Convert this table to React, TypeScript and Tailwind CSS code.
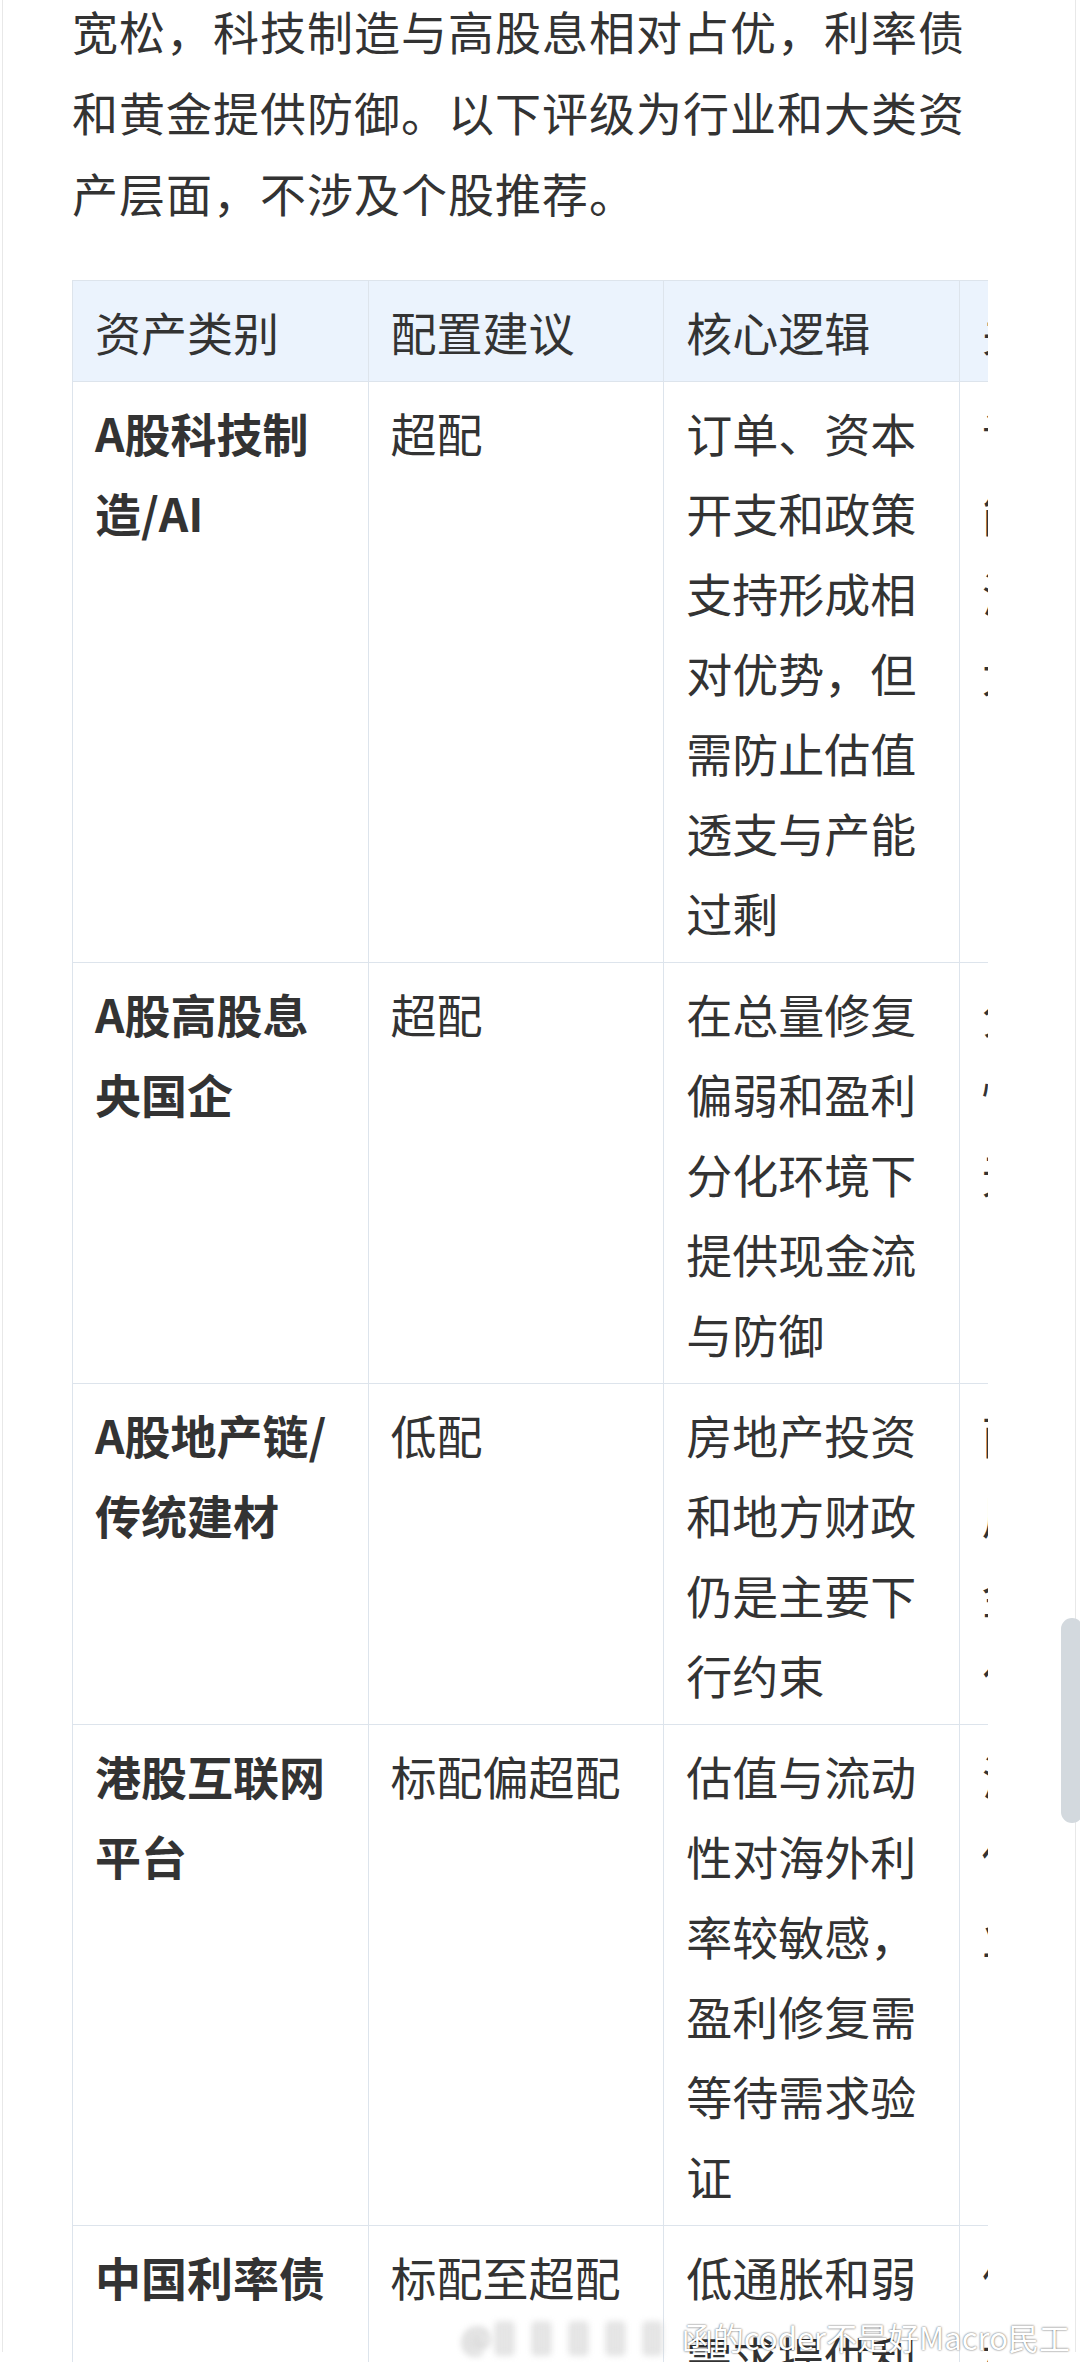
import React from 'react';

type Row = {
  asset: string[];
  advice: string;
  logic: string[];
  risk: string[];
};

const rows: Row[] = [
  {
    asset: ['A股科技制', '造/AI'],
    advice: '超配',
    logic: ['订单、资本', '开支和政策', '支持形成相', '对优势，但', '需防止估值', '透支与产能', '过剩'],
    risk: ['订单兑现与', '能见度变化', '海外管制', '大幅波动'],
  },
  {
    asset: ['A股高股息', '央国企'],
    advice: '超配',
    logic: ['在总量修复', '偏弱和盈利', '分化环境下', '提供现金流', '与防御'],
    risk: ['分红可持续', '性与回购', '无风险利率'],
  },
  {
    asset: ['A股地产链/', '传统建材'],
    advice: '低配',
    logic: ['房地产投资', '和地方财政', '仍是主要下', '行约束'],
    risk: ['面积与价格', '周期底部', '金融支持', '化债进度'],
  },
  {
    asset: ['港股互联网', '平台'],
    advice: '标配偏超配',
    logic: ['估值与流动', '性对海外利', '率较敏感，', '盈利修复需', '等待需求验', '证'],
    risk: ['海外流动性', '估值修复', '业绩兑现'],
  },
  {
    asset: ['中国利率债'],
    advice: '标配至超配',
    logic: ['低通胀和弱', '需求提供利', '率下行空间'],
    risk: ['信用扩张', '机构行为'],
  },
];

const headers = ['资产类别', '配置建议', '核心逻辑', '关键风险', '观察指标'];

function Lines({ lines }: { lines: string[] }) {
  return (
    <>
      {lines.map((l, i) => (
        <span key={i} className="block whitespace-nowrap">
          {l}
        </span>
      ))}
    </>
  );
}

export default function App() {
  return (
    <div
      className="relative w-[1080px] h-[2362px] overflow-hidden bg-white text-[#333333]"
      style={{ fontFamily: '"Noto Sans CJK SC", "Noto Sans", sans-serif' }}
    >
      <div className="ml-[2px] w-[1074px] h-full border-x border-[#e8e8e8] pl-[69px]">
        <p className="mt-[-10px] text-[46px] leading-[81px] tracking-[1px]">
          宽松，科技制造与高股息相对占优，利率债
          <br />
          和黄金提供防御。以下评级为行业和大类资
          <br />
          产层面，不涉及个股推荐。
        </p>

        <div className="mt-[47px] w-[916px] overflow-hidden">
          <table className="border-collapse table-fixed w-[1478px] text-[46px] leading-[80px]">
            <thead>
              <tr className="bg-[#ebf3fd]">
                {headers.map((h) => (
                  <th
                    key={h}
                    className="w-[295.6px] border border-[#dde4ec] px-[22px] py-[10px] text-left font-normal whitespace-nowrap"
                  >
                    {h}
                  </th>
                ))}
              </tr>
            </thead>
            <tbody>
              {rows.map((r, i) => (
                <tr key={i}>
                  <td className="align-top border border-[#dde4ec] px-[22px] py-[10px] font-bold">
                    <Lines lines={r.asset} />
                  </td>
                  <td className="align-top border border-[#dde4ec] px-[22px] py-[10px] whitespace-nowrap">
                    {r.advice}
                  </td>
                  <td className="align-top border border-[#dde4ec] px-[22px] py-[10px]">
                    <Lines lines={r.logic} />
                  </td>
                  <td className="align-top border border-[#dde4ec] px-[22px] py-[10px]">
                    <Lines lines={r.risk} />
                  </td>
                  <td className="align-top border border-[#dde4ec] px-[22px] py-[10px]">
                    <Lines lines={r.risk} />
                  </td>
                </tr>
              ))}
            </tbody>
          </table>
        </div>
      </div>

      {/* scrollbar thumb */}
      <div className="absolute left-[1061px] top-[1618px] w-[22px] h-[205px] rounded-full bg-[#d3d9de]" />

      {/* watermark */}
      <div className="absolute right-[10px] top-[2318px] flex items-center text-[31px] leading-[38px] text-white [text-shadow:0_0_2px_rgba(0,0,0,0.75)]">
        <span className="blur-[3px] text-[#e6e6e6] tracking-[6px]">@▌▌▌▌▌</span>
        <span>函的coder不是好Macro民工</span>
      </div>
    </div>
  );
}
